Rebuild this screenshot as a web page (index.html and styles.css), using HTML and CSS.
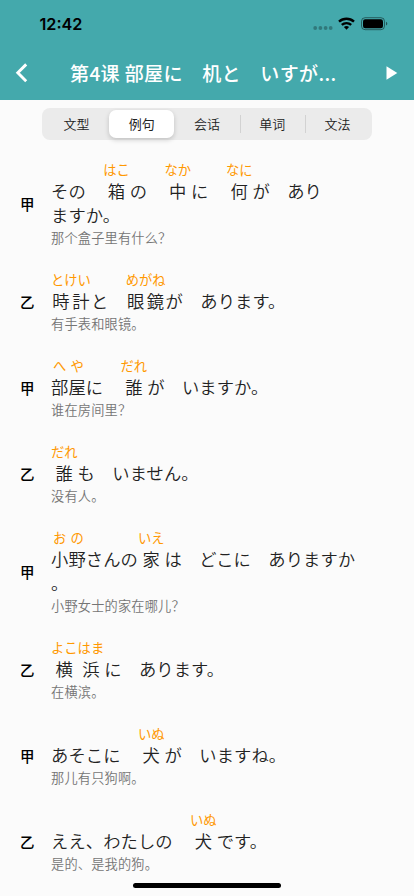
FILE: index.html
```html
<!DOCTYPE html>
<html lang="ja">
<head>
    <meta charset="UTF-8">
    <meta name="viewport" content="width=device-width, initial-scale=1.0">
    <title>第4课</title>
    <link rel="stylesheet" href="styles.css">
</head>
<body>

    <div class="app">
        <header class="header">
            <div class="status">
                <span class="time">12:42</span>
                <svg class="status-icons" width="76" height="16" viewBox="0 0 76 16">
                    <g fill="#000" opacity="0.28">
                        <circle cx="2.2" cy="12" r="1.9"/>
                        <circle cx="7.4" cy="12" r="1.9"/>
                        <circle cx="12.6" cy="12" r="1.9"/>
                        <circle cx="17.7" cy="12" r="1.9"/>
                    </g>
                    <g fill="none" stroke="#000" stroke-width="2.4">
                        <path d="M26 5.7a11 11 0 0 1 15 0"/>
                        <path d="M28.8 8.9a7 7 0 0 1 9.4 0"/>
                    </g>
                    <path d="M33.5 13.7l-2.6-2.6a3.8 3.8 0 0 1 5.2 0z"/>
                    <rect x="48.5" y="1.7" width="23" height="12" rx="3.6" fill="none" stroke="#000" stroke-opacity="0.45"/>
                    <rect x="50" y="3.2" width="20" height="9" rx="2.2"/>
                    <path d="M73 5.8v3.8c1.8-.7 1.8-3.1 0-3.8z" opacity="0.5"/>
                </svg>
            </div>
            <div class="nav">
                <svg class="back" width="14" height="20" viewBox="0 0 14 20">
                    <path d="M11.2 1.4L2.8 9.8l8.4 8.4" fill="none" stroke="#fff" stroke-width="2.9"/>
                </svg>
                <h1 class="title">第4课 部屋に　机と　いすが...</h1>
                <svg class="play" width="12" height="14" viewBox="0 0 12 14">
                    <path d="M.5 .2v13.6L11.3 7z" fill="#fff"/>
                </svg>
            </div>
        </header>

        <nav class="tabs" lang="zh-CN">
            <span class="tab">文型</span>
            <span class="tab active">例句</span>
            <span class="tab">会话</span>
            <span class="tab divided">单词</span>
            <span class="tab divided">文法</span>
        </nav>

        <main class="list">
            <div class="item">
                <div class="speaker">甲</div>
                <div class="content">
                    <div class="line">その　<span class="word"><span class="kana">はこ</span><span class="kanji"><span>箱</span></span></span>の　<span class="word"><span class="kana">なか</span><span class="kanji"><span>中</span></span></span>に　<span class="word"><span class="kana">なに</span><span class="kanji"><span>何</span></span></span>が　あり</div>
                    <div class="line wrapped">ますか。</div>
                    <div class="translation" lang="zh-CN">那个盒子里有什么？</div>
                </div>
            </div>
            <div class="item">
                <div class="speaker">乙</div>
                <div class="content">
                    <div class="line"><span class="word"><span class="kana">とけい</span><span class="kanji"><span>時</span><span>計</span></span></span>と　<span class="word"><span class="kana">めがね</span><span class="kanji"><span>眼</span><span>鏡</span></span></span>が　あります。</div>
                    <div class="translation" lang="zh-CN">有手表和眼镜。</div>
                </div>
            </div>
            <div class="item">
                <div class="speaker">甲</div>
                <div class="content">
                    <div class="line"><span class="word"><span class="kana"><span>へ</span><span>や</span></span><span class="kanji"><span>部</span><span>屋</span></span></span>に　<span class="word"><span class="kana">だれ</span><span class="kanji"><span>誰</span></span></span>が　いますか。</div>
                    <div class="translation" lang="zh-CN">谁在房间里？</div>
                </div>
            </div>
            <div class="item">
                <div class="speaker">乙</div>
                <div class="content">
                    <div class="line"><span class="word"><span class="kana">だれ</span><span class="kanji"><span>誰</span></span></span>も　いません。</div>
                    <div class="translation" lang="zh-CN">没有人。</div>
                </div>
            </div>
            <div class="item">
                <div class="speaker">甲</div>
                <div class="content">
                    <div class="line"><span class="word"><span class="kana"><span>お</span><span>の</span></span><span class="kanji"><span>小</span><span>野</span></span></span>さんの<span class="word"><span class="kana">いえ</span><span class="kanji"><span>家</span></span></span>は　どこに　ありますか</div>
                    <div class="line wrapped">。</div>
                    <div class="translation" lang="zh-CN">小野女士的家在哪儿？</div>
                </div>
            </div>
            <div class="item">
                <div class="speaker">乙</div>
                <div class="content">
                    <div class="line"><span class="word"><span class="kana">よこはま</span><span class="kanji"><span>横</span><span>浜</span></span></span>に　あります。</div>
                    <div class="translation" lang="zh-CN">在横滨。</div>
                </div>
            </div>
            <div class="item">
                <div class="speaker">甲</div>
                <div class="content">
                    <div class="line">あそこに　<span class="word"><span class="kana">いぬ</span><span class="kanji"><span>犬</span></span></span>が　いますね。</div>
                    <div class="translation" lang="zh-CN">那儿有只狗啊。</div>
                </div>
            </div>
            <div class="item">
                <div class="speaker">乙</div>
                <div class="content">
                    <div class="line">ええ、わたしの　<span class="word"><span class="kana">いぬ</span><span class="kanji"><span>犬</span></span></span>です。</div>
                    <div class="translation" lang="zh-CN">是的、是我的狗。</div>
                </div>
            </div>
        </main>
        <div class="home-bar"></div>
    </div>

</body>
</html>
```
FILE: styles.css
```css
* {
    box-sizing: border-box;
}
body {
    margin: 0;
    font-family: "Noto Sans CJK JP", sans-serif;
    background-color: #fbfbfb;
    color: #222;
}
:lang(zh-CN) {
    font-family: "Noto Sans CJK SC", sans-serif;
}
.app {
    position: relative;
    width: 414px;
    height: 896px;
    overflow: hidden;
}
.header {
    height: 100px;
    background-color: #44a9ac;
}
.status {
    display: flex;
    justify-content: space-between;
    height: 48px;
    padding: 16px 25px 0 39.5px;
}
.time {
    font-family: Inter, sans-serif;
    font-size: 16.2px;
    font-weight: 600;
    line-height: 16px;
    color: #000;
}
.nav {
    display: flex;
    align-items: center;
    height: 50px;
    padding: 0 16px 0 15px;
}
.title {
    flex: 1;
    margin: 0;
    padding-left: 41px;
    font-size: 19px;
    font-weight: 500;
    letter-spacing: 0.38px;
    line-height: 28px;
    white-space: nowrap;
    color: #fff;
}
.tabs {
    display: flex;
    width: 330px;
    height: 32px;
    margin: 8px 0 0 42px;
    padding: 2px;
    border-radius: 8px;
    background-color: #ebebeb;
}
.tab {
    display: flex;
    flex: 1;
    align-items: center;
    justify-content: center;
    font-size: 13px;
    font-weight: 350;
    line-height: 20px;
}
.tab.active {
    border-radius: 7px;
    background-color: #fff;
    font-weight: 400;
    box-shadow: 0 2px 5px rgba(0,0,0,0.18);
}
.tab.divided {
    background: linear-gradient(#d2d2d2, #d2d2d2) left center / 1px 18px no-repeat;
}
.list {
    padding-top: 9px;
}
.item {
    display: flex;
    align-items: center;
    padding: 12px 0;
}
.speaker {
    width: 51px;
    padding: 0 0 1px 20px;
    font-size: 14.5px;
    font-weight: 500;
    line-height: 24px;
    color: #000;
}
.line {
    display: flex;
    align-items: flex-end;
    height: 42px;
    font-size: 17.3px;
    font-weight: 350;
    letter-spacing: 0.1px;
    line-height: 24px;
    white-space: nowrap;
}
.line.wrapped {
    height: 24px;
}
.word {
    display: flex;
    flex-direction: column;
}
.kana {
    display: flex;
    justify-content: space-around;
    font-size: 13.3px;
    font-weight: 400;
    letter-spacing: 0;
    line-height: 18px;
    color: #ff9800;
}
.kanji {
    display: flex;
    justify-content: space-around;
}
.translation {
    height: 20px;
    font-size: 13.2px;
    font-weight: 350;
    letter-spacing: 0.2px;
    line-height: 22px;
    color: #757575;
}
.home-bar {
    position: absolute;
    bottom: 8px;
    left: 133px;
    width: 148px;
    height: 5px;
    border-radius: 3px;
    background-color: #000;
}
```
